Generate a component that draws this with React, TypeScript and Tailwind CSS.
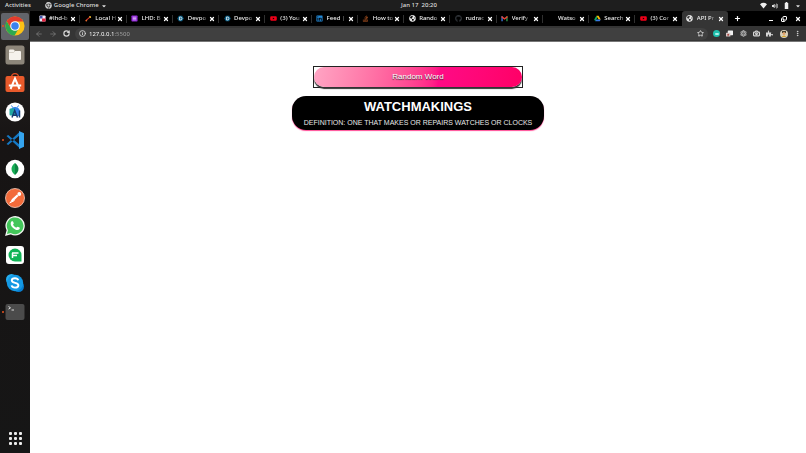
import type { ReactNode } from 'react';
import {
  ArrowLeft,
  ArrowRight,
  Camera,
  Copy,
  EllipsisVertical,
  Info,
  Plus,
  RotateCw,
  Star,
  X,
} from 'lucide-react';
import {
  FaAtom,
  FaCaretDown,
  FaChrome,
  FaGithub,
  FaGlobeAmericas,
  FaLinkedin,
  FaPuzzlePiece,
  FaStackOverflow,
  FaVolumeUp,
  FaYoutube,
} from 'react-icons/fa';

function ChromeLogo() {
  return (
    <svg viewBox="0 0 48 48" className="size-5">
      <circle cx="24" cy="24" r="23" fill="#fbc116" />
      <path d="M4.1 12.5 14.5 30 24 24V13h20A23 23 0 0 0 4.1 12.5z" fill="#e33b2e" />
      <path d="M4.1 12.5A23 23 0 0 0 23 47l10-17.5L14.5 30z" fill="#2da94f" />
      <circle cx="24" cy="24" r="11.5" fill="#fff" />
      <circle cx="24" cy="24" r="9" fill="#3b82ee" />
    </svg>
  );
}

function FilesLogo() {
  return (
    <svg viewBox="0 0 20 20" className="size-5">
      <rect x=".5" y=".5" width="19" height="19" rx="2.5" fill="#8d867a" />
      <path d="M4 5.5q0-1 1-1h3.5l1.5 1.5h5q1 0 1 1V14q0 1-1 1H5q-1 0-1-1z" fill="#f5f2ec" />
      <path d="M4 7.5h4.500l1.500-1.500" stroke="#c9c3b8" strokeWidth=".7" fill="none" />
    </svg>
  );
}

function SoftwareLogo() {
  return (
    <svg viewBox="0 0 20 20" className="size-5">
      <path d="M6.5 4a3.5 3.5 0 0 1 7 0" stroke="#d84a20" strokeWidth="1.3" fill="none" />
      <rect x=".5" y="3" width="19" height="16" rx="2" fill="#e95a2b" />
      <path d="M5.5 16 10 5.5 14.5 16M3.8 12.5h12.400" stroke="#fff" strokeWidth="2" fill="none" />
    </svg>
  );
}

function AndroidStudioLogo() {
  return (
    <svg viewBox="0 0 20 20" className="size-5">
      <circle cx="10" cy="10" r="9.5" fill="#fff" />
      <path d="M5.5 8a5 5 0 0 1 9.5 1v5H7z" fill="#3182e8" />
      <path d="m6.5 3.5 1.2 2M13.5 3.5l-1.2 2" stroke="#3182e8" strokeWidth="1" />
      <rect x="4.5" y="6.5" width="5.5" height="7" rx="1" fill="#1fa7a0" />
      <path d="m7 15.5 2.7-7 2.8 7M8 13.3h3.5M14.500 8.500v7" stroke="#163b70" strokeWidth="1.5" fill="none" />
    </svg>
  );
}

function CodeLogo() {
  return (
    <svg viewBox="0 0 20 20" className="size-5">
      <path d="m1.5 6 1.7-1L15 15v3.5zM1.5 14l1.7 1L15 5V1.500z" fill="#1679c5" />
      <path d="m14 1 5 2.3v13.400L14 19z" fill="#35a4ee" />
    </svg>
  );
}

function MongoLogo() {
  return (
    <svg viewBox="0 0 20 20" className="size-5">
      <circle cx="10" cy="10" r="9.3" fill="#fff" />
      <path d="M10 4c-4.500 3-4.800 8.500 0 12z" fill="#17ad55" />
      <path d="M10 4c4.500 3 4.800 8.500 0 12z" fill="#0c8542" />
    </svg>
  );
}

function PostmanLogo() {
  return (
    <svg viewBox="0 0 20 20" className="size-5">
      <circle cx="10" cy="10" r="9.5" fill="#f26b3a" stroke="#f9d1c1" strokeWidth=".8" />
      <path d="m5 14.500 2-3.500 5-4.500 1.500 1.500-4.500 4.500z" fill="#fff" />
      <path d="m4.500 15 5-2.500" stroke="#fff" strokeWidth="1" />
      <circle cx="14.300" cy="6" r="1.900" fill="#fff" />
    </svg>
  );
}

function WhatsappLogo() {
  return (
    <svg viewBox="0 0 20 20" className="size-5">
      <path d="m1 19 1.300-4.800A9 9 0 1 1 5.900 17.700z" fill="#43c65a" stroke="#f2f7f2" strokeWidth="1.300" />
      <path
        d="M6.800 5.300c.4-.3 1-.2 1.200.2l.8 1.800c.1.500-.7 1-.7 1.400.7 1.400 1.800 2.300 3.200 2.900.5-.1.900-1.100 1.400-.9l1.800.9c.5.300.3 1-.1 1.600-2.700 2.900-9.700-2.600-8.600-6.500.2-.6.500-1.100 1-1.400z"
        fill="#fff"
      />
    </svg>
  );
}

function FlockLogo() {
  return (
    <svg viewBox="0 0 20 20" className="size-5">
      <rect x="1" y="1" width="18" height="18" rx="3" fill="#fff" />
      <path d="M10 3.500a6.500 6.500 0 1 0 0 13h6.500V10A6.500 6.500 0 0 0 10 3.500z" fill="#11b557" />
      <path d="M7 8h6.500M7 10.500h5M7.500 8v5" stroke="#fff" strokeWidth="1.500" fill="none" />
    </svg>
  );
}

function SkypeLogo() {
  return (
    <svg viewBox="0 0 20 20" className="size-5">
      <circle cx="6.500" cy="6.500" r="5.500" fill="#25aef0" />
      <circle cx="13.500" cy="13.500" r="5.500" fill="#087ed0" />
      <circle cx="10" cy="10" r="8.200" fill="#1499e4" />
      <path
        d="M13.200 7.300C12.800 5.900 11.500 5.300 10 5.300c-1.800 0-3.200.8-3.200 2.200 0 3 6.600 1.700 6.600 4.700 0 1.600-1.600 2.400-3.400 2.400-1.700 0-3.100-.7-3.400-2.200"
        stroke="#fff"
        strokeWidth="1.900"
        fill="none"
      />
    </svg>
  );
}

function TerminalLogo() {
  return (
    <svg viewBox="0 0 20 20" className="size-5">
      <rect x=".5" y="2" width="19" height="16" rx="2" fill="#4b4b4b" />
      <path d="m3.500 4.500 2 1.300-2 1.300M6.500 8H9" stroke="#eee" strokeWidth=".9" fill="none" />
    </svg>
  );
}

const dockItems: {
  name: string;
  icon: ReactNode;
  running?: boolean;
  active?: boolean;
}[] = [
  { name: 'Google Chrome', icon: <ChromeLogo />, running: true, active: true },
  { name: 'Files', icon: <FilesLogo /> },
  { name: 'Software', icon: <SoftwareLogo /> },
  { name: 'Android Studio', icon: <AndroidStudioLogo /> },
  { name: 'Code', icon: <CodeLogo />, running: true },
  { name: 'Compass', icon: <MongoLogo /> },
  { name: 'Postman', icon: <PostmanLogo /> },
  { name: 'WhatsApp', icon: <WhatsappLogo /> },
  { name: 'Flock', icon: <FlockLogo /> },
  { name: 'Skype', icon: <SkypeLogo /> },
  { name: 'Terminal', icon: <TerminalLogo />, running: true },
];

function LhdIcon() {
  return (
    <svg viewBox="0 0 8 8" className="size-[7px]">
      <rect x=".5" y=".5" width="7" height="7" rx="1" fill="#e9e5f5" />
      <path d="M1 1h3v3H1z" fill="#3d52a8" />
      <path d="M3.500 4h4v3.500h-4z" fill="#e4203c" />
    </svg>
  );
}

function LocalIcon() {
  return (
    <svg viewBox="0 0 8 8" className="size-[7px]">
      <path d="m1 6.500 4.500-4" stroke="#d9342b" strokeWidth="1.200" />
      <path d="m4.500 1.500 2-.5.500 2-1.500.5z" fill="#f1b82d" />
      <circle cx="1.500" cy="6.300" r="1" fill="#e66a2c" />
    </svg>
  );
}

function FormsIcon() {
  return (
    <svg viewBox="0 0 8 8" className="size-[7px]">
      <rect x=".5" y=".5" width="7" height="7" rx=".8" fill="#9127d8" />
      <path d="M2 2.500h4M2 4h4M2 5.500h4" stroke="#e8cffa" strokeWidth=".8" />
    </svg>
  );
}

function DevpostIcon() {
  return (
    <svg viewBox="0 0 8 8" className="size-[7px]">
      <path d="M2.200.8h3.600L7.700 4 5.800 7.200H2.200L.3 4z" fill="#0b5e85" />
      <path d="M3 2.300h.9a1.700 1.700 0 0 1 0 3.400H3z" stroke="#fff" strokeWidth=".9" fill="none" />
    </svg>
  );
}

function GmailIcon() {
  return (
    <svg viewBox="0 0 8 8" className="size-[7px]">
      <path d="M.5 1.500h1.400V7H.5z" fill="#4285f4" />
      <path d="M6.100 1.500h1.400V7H6.100z" fill="#34a853" />
      <path d="m.5 1.500 1-.2L4 3.300l2.500-2 1 .2v1.300L4 5.400.5 2.800z" fill="#ea4335" />
    </svg>
  );
}

function DriveIcon() {
  return (
    <svg viewBox="0 0 8 8" className="size-[7px]">
      <path d="M2.800.8 4 2.900 1.500 7.200.2 5.100z" fill="#0da960" />
      <path d="M2.800.8h2.400l2.600 4.300H5.300z" fill="#ffba00" />
      <path d="M2.700 5.100h5.100L6.500 7.200h-5z" fill="#3777e3" />
    </svg>
  );
}

const youtube = <FaYoutube className="size-[7px] text-[#f00018]" />;
const globe = <FaGlobeAmericas className="size-[7px] text-[#e2e2e2]" />;

const tabs: { title: string; icon?: ReactNode; active?: boolean }[] = [
  { title: '#lhd-b', icon: <LhdIcon /> },
  { title: 'Local H', icon: <LocalIcon /> },
  { title: 'LHD: B', icon: <FormsIcon /> },
  { title: 'Devpo', icon: <DevpostIcon /> },
  { title: 'Devpo', icon: <DevpostIcon /> },
  { title: '(3) You', icon: youtube },
  { title: 'Feed |', icon: <FaLinkedin className="size-[7px] text-[#2389d7]" /> },
  { title: 'How to', icon: <FaStackOverflow className="size-[7px] text-[#bd5b24]" /> },
  { title: 'Rando', icon: globe },
  { title: 'rudrac', icon: <FaGithub className="size-[7px] text-[#303439]" /> },
  { title: 'Verify', icon: <GmailIcon /> },
  { title: 'Watso' },
  { title: 'Search', icon: <DriveIcon /> },
  { title: '(3) Cor', icon: youtube },
  { title: 'API Pr', icon: globe, active: true },
];

function TopBar() {
  return (
    <header className="grid h-[11px] grid-cols-3 items-center bg-[#1e1e1e] px-[5px] text-[6px] font-medium text-[#dedede]">
      <div className="flex items-center gap-[14px]">
        <button>Activities</button>
        <button className="flex items-center gap-[2px]">
          <FaChrome className="size-[7px] text-[#c8c8c8]" />
          Google Chrome
          <FaCaretDown className="size-[6px]" />
        </button>
      </div>
      <button className="justify-self-center pl-8">Jan 17&nbsp; 20:20</button>
      <div className="flex items-center justify-end gap-[5px]">
        <svg viewBox="0 0 8 8" className="size-[7px]" aria-label="Wi-Fi">
          <path d="M0 2.500Q4-.8 8 2.500L4 7.500z" fill="#eee" />
        </svg>
        <FaVolumeUp className="size-[6px]" />
        <svg viewBox="0 0 8 8" className="size-[7px]" aria-label="Battery">
          <path d="M3 0h2v1h1v7H2V1h1z" fill="#eee" />
        </svg>
        <FaCaretDown className="size-[6px]" />
      </div>
    </header>
  );
}

function Dock() {
  return (
    <nav
      aria-label="Dock"
      className="flex w-[30px] shrink-0 flex-col justify-between bg-linear-to-b from-[#292724] via-[#171414] via-30% to-[#161616] pt-px pb-2"
    >
      <ul className="grid h-[314px] grid-rows-11">
        {dockItems.map((item) => (
          <li key={item.name} className="relative flex p-px">
            <button
              aria-label={item.name}
              className={`flex flex-1 items-center justify-center rounded-xs ${item.active ? 'bg-[#62646a]' : ''}`}
            >
              {item.icon}
            </button>
            {item.running && (
              <span className="absolute top-1/2 left-[2px] size-[2px] -translate-y-1/2 rounded-full bg-[#e95420]" />
            )}
          </li>
        ))}
      </ul>
      <button aria-label="Show Applications" className="grid grid-cols-3 gap-[2px] self-center">
        {Array.from({ length: 9 }, (_, i) => (
          <span key={i} className="size-[3px] rounded-[1px] bg-[#ededed]" />
        ))}
      </button>
    </nav>
  );
}

function TabStrip() {
  return (
    <div className="flex h-[15px] bg-black pl-1 text-[6px] font-medium text-[#ececec]">
      <div role="tablist" className="grid min-w-0 flex-1 grid-cols-15">
        {tabs.map((tab, i) => (
          <div
            key={i}
            className={`flex min-w-0 items-center pl-1 ${tab.active ? 'rounded-t-[3px] bg-[#353535]' : ''}`}
          >
            <button
              role="tab"
              aria-selected={!!tab.active}
              className="flex min-w-0 flex-1 items-center gap-[3px]"
            >
              <span className="flex w-2 shrink-0 justify-center">{tab.icon}</span>
              <span className="whitespace-nowrap mask-r-from-75% mask-r-to-110%">{tab.title}</span>
            </button>
            <button aria-label={`Close ${tab.title}`}>
              <X className="size-[6px] text-white" strokeWidth={5} />
            </button>
            <span
              className={`ml-[3px] h-2 w-px ${tab.active || i === tabs.length - 2 ? '' : 'bg-[#303030]'}`}
            />
          </div>
        ))}
      </div>
      <div className="flex w-[78px] items-center justify-between pr-[5px] pl-[6px] text-white">
        <button aria-label="New tab">
          <Plus className="size-[7px]" strokeWidth={4} />
        </button>
        <div className="flex items-center gap-2">
          <button aria-label="Minimize" className="mt-1 h-px w-1 bg-white" />
          <button aria-label="Restore">
            <Copy className="size-[6px] -scale-y-100" strokeWidth={4} />
          </button>
          <button aria-label="Close window">
            <X className="size-[6px]" strokeWidth={5} />
          </button>
        </div>
      </div>
    </div>
  );
}

function Toolbar() {
  return (
    <div className="flex h-4 items-center border-b border-[#777] bg-[#353535] pr-[5px] pl-[5px] text-[#d8d8d8]">
      <div className="flex gap-[6px]">
        <button aria-label="Back">
          <ArrowLeft className="size-2 text-[#858585]" />
        </button>
        <button aria-label="Forward">
          <ArrowRight className="size-2 text-[#858585]" />
        </button>
        <button aria-label="Reload">
          <RotateCw className="size-[7px]" strokeWidth={4} />
        </button>
      </div>
      <div className="ml-[5px] flex h-3 flex-1 items-center gap-[3px] rounded-full bg-[#404040] px-1">
        <Info className="size-[7px]" strokeWidth={3} />
        <label className="flex flex-1 items-center text-[6px] font-medium">
          <span className="sr-only">Address</span>
          <input
            defaultValue="127.0.0.1:5500"
            className="h-3 w-full bg-linear-to-r from-[#f4f4f4] from-[26px] to-[#969696] to-[26px] bg-clip-text leading-3 text-transparent outline-none"
          />
        </label>
        <button aria-label="Bookmark">
          <Star className="size-[7px]" strokeWidth={3} />
        </button>
      </div>
      <div className="ml-[5px] flex w-[88px] items-center justify-between">
        <button
          aria-label="Grammar extension"
          className="flex size-[7px] items-center justify-center rounded-full bg-[#1fbfad]"
        >
          <span className="h-[2px] w-1 rounded-full bg-[#aaf2e9]" />
        </button>
        <button aria-label="Screen recorder">
          <svg viewBox="0 0 8 8" className="size-[7px]">
            <rect x="2" y=".5" width="6" height="5.500" rx=".5" fill="#f0f0f0" />
            <rect x="0" y="3" width="5" height="4.500" rx=".5" fill="#d9c8c6" />
            <path d="M1.500 4.500h2v2h-2z" fill="#a84b46" />
          </svg>
        </button>
        <button aria-label="React tools">
          <FaAtom className="size-[7px] text-[#aaa]" />
        </button>
        <button aria-label="Capture">
          <Camera className="size-[7px]" strokeWidth={4} />
        </button>
        <button aria-label="Extensions">
          <FaPuzzlePiece className="size-[7px]" />
        </button>
        <button aria-label="Profile">
          <svg viewBox="0 0 8 8" className="size-2">
            <rect width="8" height="8" rx="4" fill="#d8d1bc" />
            <path d="M2 1h4v2H2z" fill="#43402f" />
            <circle cx="4" cy="3.500" r="1.500" fill="#e0a36b" />
            <path d="M1.500 7q2.500-3 5 0z" fill="#d6a629" />
          </svg>
        </button>
        <button aria-label="Menu">
          <EllipsisVertical className="size-[7px]" strokeWidth={3} />
        </button>
      </div>
    </div>
  );
}

function WordPage() {
  return (
    <main className="flex flex-1 flex-col items-center bg-white pt-6 font-['Liberation_Sans',sans-serif] text-white">
      <div className="border border-[#222]">
        <button className="block h-5 w-[208px] rounded-[10px] bg-linear-100 from-[#ffa5c4] via-[#ff0a85] via-60% to-[#ff0066] text-[8px] shadow-[0_2px_1px_#333] text-shadow-[0_1px_1px_#333]">
          Random Word
        </button>
      </div>
      <section className="mt-2 flex w-[252px] flex-col items-center rounded-[14px] bg-black pt-[3px] shadow-[0_1px_1px_#ff4d96]">
        <h1 className="text-[13px] leading-4 font-bold">WATCHMAKINGS</h1>
        <p className="text-[7px] leading-[15px] whitespace-nowrap text-[#e8e8e8]">
          DEFINITION: ONE THAT MAKES OR REPAIRS WATCHES OR CLOCKS
        </p>
      </section>
    </main>
  );
}

export default function App() {
  return (
    <div className="flex min-h-screen flex-col bg-[#161616] font-['Noto_Sans','Open_Sans',sans-serif]">
      <TopBar />
      <div className="flex flex-1">
        <Dock />
        <div className="flex min-w-0 flex-1 flex-col">
          <TabStrip />
          <Toolbar />
          <WordPage />
        </div>
      </div>
    </div>
  );
}
